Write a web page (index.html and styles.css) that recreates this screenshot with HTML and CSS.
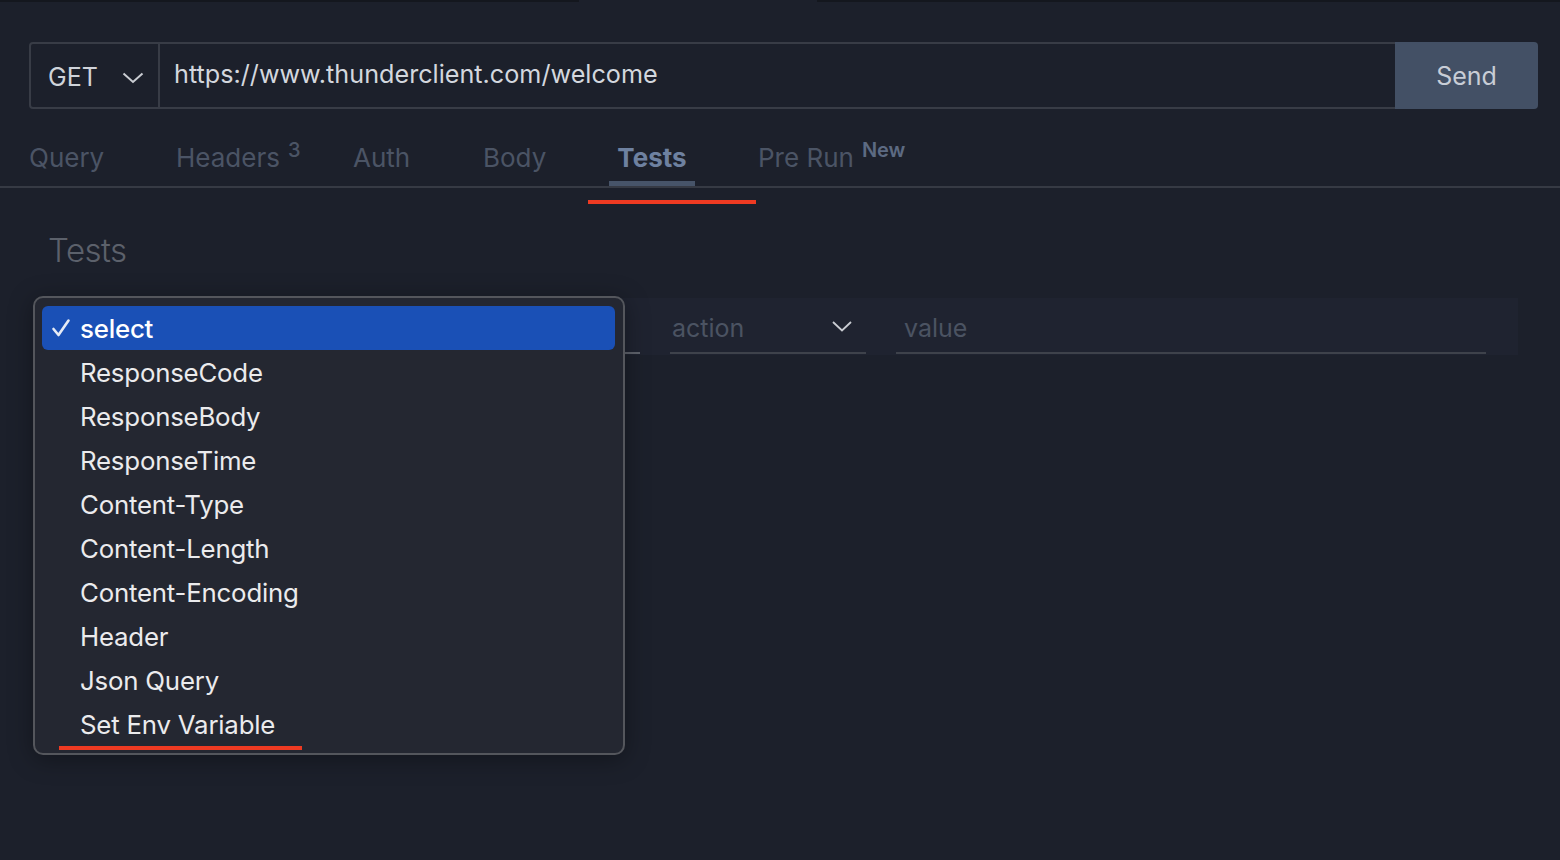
FILE: index.html
```html
<!DOCTYPE html>
<html>
<head>
<meta charset="utf-8">
<link rel="stylesheet" href="styles.css">
</head>
<body>
<div class="topstrip"><div class="ts-dark ts-left"></div><div class="ts-gap"></div><div class="ts-dark ts-right"></div></div>
<div class="urlbar">
  <div class="method"><span>GET</span>
    <svg class="chev" width="22" height="12" viewBox="0 0 22 12"><path d="M1.5 1.5 L11 10 L20.5 1.5" fill="none" stroke="#c9ccd2" stroke-width="2"/></svg>
  </div>
  <div class="url">https://www.thunderclient.com/welcome</div>
  <div class="send">Send</div>
</div>
<div class="tabs">
  <div class="tab t-query"><span class="lbl">Query</span></div>
  <div class="tab t-headers"><span class="lbl">Headers<sup>3</sup></span></div>
  <div class="tab t-auth"><span class="lbl">Auth</span></div>
  <div class="tab t-body"><span class="lbl">Body</span></div>
  <div class="tab t-tests active"><span class="lbl">Tests</span></div>
  <div class="tab t-prerun"><span class="lbl">Pre Run<sup class="new">New</sup></span></div>
</div>
<div class="redline red-tab"></div>
<main class="content">
  <h2 class="heading">Tests</h2>
  <div class="testrow">
    <div class="field f-select"></div>
    <div class="field f-action"><span>action</span>
      <svg class="chev2" width="20" height="11" viewBox="0 0 20 11"><path d="M1 1 L10 9.5 L19 1" fill="none" stroke="#c9ccd2" stroke-width="1.8"/></svg>
    </div>
    <div class="field f-value"><span>value</span></div>
  </div>
</main>
<div class="menu">
  <div class="item selected"><svg class="check" width="20" height="20" viewBox="0 0 20 20"><path d="M2.5 11 L7.5 17 L17.5 2.5" fill="none" stroke="#e6ebf5" stroke-width="2.6" stroke-linecap="round" stroke-linejoin="round"/></svg>select</div>
  <div class="item">ResponseCode</div>
  <div class="item">ResponseBody</div>
  <div class="item">ResponseTime</div>
  <div class="item">Content-Type</div>
  <div class="item">Content-Length</div>
  <div class="item">Content-Encoding</div>
  <div class="item">Header</div>
  <div class="item">Json Query</div>
  <div class="item">Set Env Variable</div>
</div>
<div class="redline red-menu"></div>
</body>
</html>
```
FILE: styles.css
```css
html, body {
  margin: 0;
  padding: 0;
  background: #1c202b;
  width: 1560px;
  height: 860px;
  overflow: hidden;
  font-family: Inter, "Noto Sans", sans-serif;
  position: relative;
}
.topstrip {
  display: flex;
  height: 2px;
}
.ts-dark { background: #14171e; }
.ts-left { width: 579px; }
.ts-gap { width: 238px; }
.ts-right { flex: 1; }

.urlbar {
  display: flex;
  margin: 40px 22px 0 29px;
  height: 67px;
}
.method {
  width: 131px;
  border: 2px solid #383c46;
  border-radius: 4px 0 0 4px;
  display: flex;
  align-items: center;
  justify-content: space-between;
  padding: 0 14px 0 17px;
  box-sizing: border-box;
  color: #cfd3da;
  font-size: 25px;
}
.method span { margin-top: 2px; }
.chev { margin-top: 4px; }
.url {
  flex: 1;
  border-top: 2px solid #383c46;
  border-bottom: 2px solid #383c46;
  display: flex;
  align-items: center;
  padding: 0 0 3px 14px;
  color: #d3d7de;
  font-size: 25.2px;
}
.send {
  width: 143px;
  background: #435065;
  border-radius: 0 4px 4px 0;
  display: flex;
  align-items: center;
  justify-content: center;
  color: #c8cdd6;
  font-size: 25px;
}

.tabs {
  display: flex;
  height: 79px;
  border-bottom: 2px solid #363a44;
  padding-left: 29px;
  box-sizing: border-box;
}
.tab {
  color: #4b5465;
  font-size: 26px;
  display: flex;
  align-items: center;
  position: relative;
  padding-top: 20px;
  box-sizing: border-box;
}
.lbl { line-height: 1; white-space: nowrap; }
.tab sup {
  font-size: 20px;
  font-weight: 500;
  position: relative;
  top: -10px;
  vertical-align: baseline;
  margin-left: 8px;
  line-height: 0;
}
.tab sup.new {
  font-weight: 600;
  color: #5c6a82;
  font-size: 20px;
  top: -10px;
  margin-left: 8px;
}
.t-query { width: 147px; }
.t-headers { width: 177px; }
.t-auth { width: 130px; }
.t-body { width: 126px; }
.t-tests {
  width: 86px;
  justify-content: center;
  color: #6e81a0;
  font-weight: 700;
}
.t-tests::after {
  content: "";
  position: absolute;
  left: 0;
  right: 0;
  bottom: 0;
  height: 5px;
  background: #475469;
}
.t-prerun { margin-left: 63px; }

.redline {
  position: absolute;
  background: #ee3a22;
  height: 4px;
}
.red-tab { left: 588px; top: 200px; width: 168px; }
.red-menu { left: 59px; top: 746px; width: 243px; }

.content {
  padding: 0 42px 0 48px;
}
.heading {
  margin: 42px 0 0 0;
  font-size: 33px;
  font-weight: 300;
  color: #5c616b;
  line-height: 40px;
  letter-spacing: -0.5px;
}
.testrow {
  margin-top: 28px;
  margin-left: 572px;
  height: 57px;
  background: #1f2330;
  display: flex;
  gap: 30px;
  padding-right: 32px;
}
.field {
  border-bottom: 2px solid #3e424b;
  height: 56px;
  padding-top: 5px;
  display: flex;
  align-items: center;
  color: #4b5362;
  font-size: 25px;
  box-sizing: border-box;
}
.f-select { width: 20px; border-color: #5e626b; }
.f-action {
  width: 196px;
  justify-content: space-between;
  padding-left: 2px;
  padding-right: 14px;
}
.f-value { flex: 1; padding-left: 8px; }
.chev2 { margin-top: -2px; }

.menu {
  position: absolute;
  left: 33px;
  top: 296px;
  width: 592px;
  height: 459px;
  box-sizing: border-box;
  background: #242731;
  border: 2px solid #54565c;
  border-radius: 10px;
  padding: 8px 8px 0 7px;
  box-shadow: 0 4px 24px rgba(0,0,0,0.35);
}
.item {
  height: 44px;
  display: flex;
  align-items: center;
  padding-left: 38px;
  color: #ebebed;
  font-size: 25.8px;
  letter-spacing: -0.2px;
  position: relative;
}
.item.selected {
  background: #1a50b6;
  border-radius: 6px;
  color: #ffffff;
  font-weight: 500;
}
.check {
  position: absolute;
  left: 9px;
  top: 12px;
}
```
